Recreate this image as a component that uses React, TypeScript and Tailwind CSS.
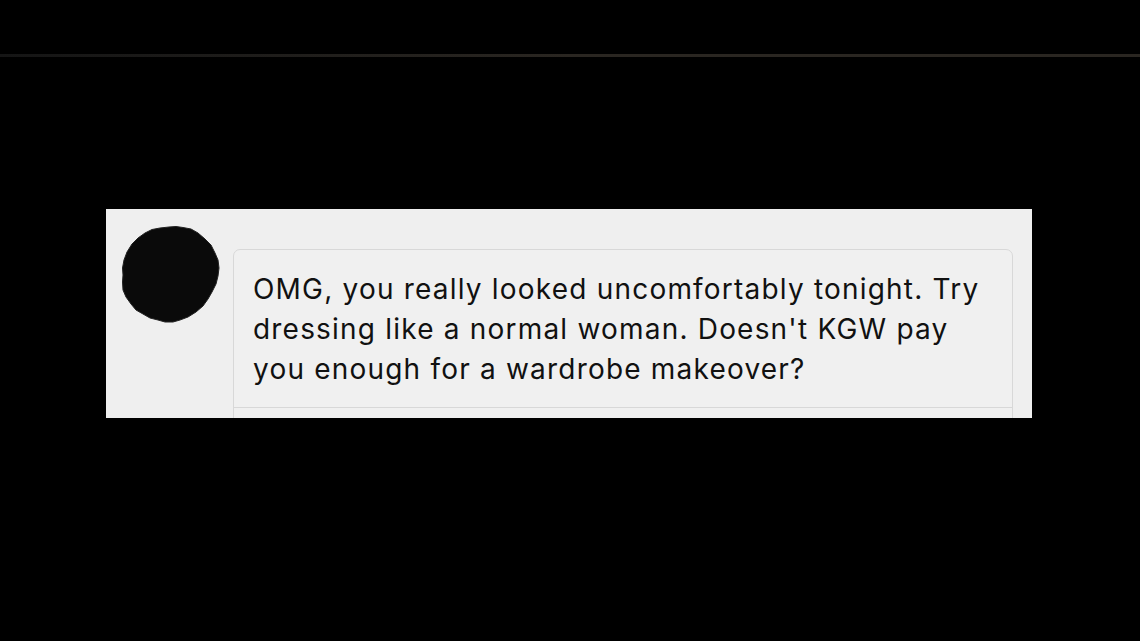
export default function App() {
  return (
    <div className="w-[1140px] h-[641px] bg-black overflow-hidden flex flex-col">
      <div className="h-[54px]" />
      <div className="h-[3px] bg-gradient-to-r from-[#151515] via-[#2a2621] to-[#2a2621]" />
      <div className="h-[152px]" />
      <div className="ml-[106px] w-[926px] h-[209px] bg-[#efefef] flex overflow-hidden">
        <div className="w-[127px] shrink-0 pl-[15px] pt-[15px]">
          <svg width="100" height="100" viewBox="0 0 100 100">
            <path
              d="M48 3 L55 2.5 L62 3.5 L70 5 L77 9 L84 15 L90 21 L94 29 L97 36 L98 44 L97 52 L95 60 L91 68 L87 75 L82 82 L75 88 L67 93 L59 96 L52 98 L44 98 L37 96 L29 94 L22 90 L15 86 L10 80 L5 73 L2 66 L1.5 58 L2 51 L1.5 44 L3 36 L6 28 L11 20 L17 14 L24 9 L31 5.5 L39 4 Z"
              fill="#0a0a0a"
              stroke="#222"
              strokeWidth="1"
              strokeLinejoin="round"
            />
          </svg>
        </div>
        <div className="flex-1 pr-[19px] pt-[40px]">
          <div className="h-[200px] border border-[#d8d8d8] rounded-[7px] bg-[#f0f0f0] flex flex-col">
            <div
              className="pl-[19px] pt-[19px] h-[158px] border-b border-[#d8d8d8] text-[#111] text-[28px] leading-[40px] tracking-[1.2px] whitespace-nowrap"
              style={{ fontFamily: "Inter, 'Liberation Sans', sans-serif" }}
            >
              OMG, you really looked uncomfortably tonight. Try
              <br />
              dressing like a normal woman. Doesn't KGW pay
              <br />
              you enough for a wardrobe makeover?
            </div>
          </div>
        </div>
      </div>
    </div>
  );
}
